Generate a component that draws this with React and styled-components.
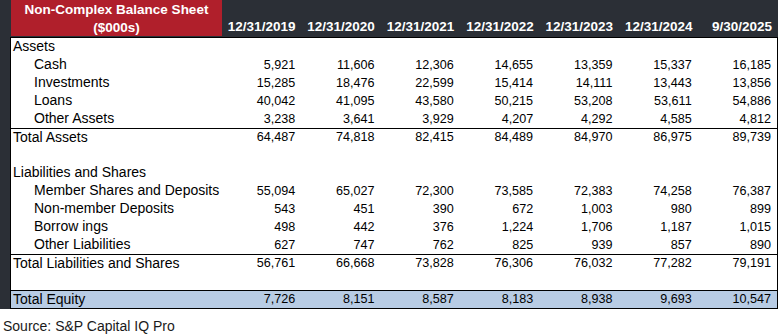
import React from "react";
import styled, { createGlobalStyle } from "styled-components";

const Global = createGlobalStyle`
  html, body { margin: 0; padding: 0; background: #fff; }
  body { font-family: "Liberation Sans", Arial, sans-serif; color: #000; }
`;

const Page = styled.div`
  width: 780px;
  height: 336px;
  background: #fff;
`;

const Frame = styled.div`
  display: flex;
  width: 778px;
`;

const Strip = styled.div`
  width: 10px;
  background: #2b2f36;
  flex: none;
`;

const Table = styled.div`
  flex: 1;
  display: flex;
  flex-direction: column;
  border-bottom: 1px solid #000;
`;

const cols = "211px repeat(7, 1fr)";

const HeaderRow = styled.div`
  display: grid;
  grid-template-columns: ${cols};
  height: 37px;
  background: #2b2f36;
  border-bottom: 1px solid #000;
  box-sizing: content-box;
  padding-left: 1px;
`;

const TitleCell = styled.div`
  background: #b01f2b;
  color: #fff;
  font-weight: bold;
  font-size: 13.5px;
  line-height: 18px;
  text-align: center;
  padding-top: 1px;
  height: 36px;
  box-sizing: border-box;
`;

const DateCell = styled.div`
  color: #fff;
  font-weight: bold;
  font-size: 13.5px;
  text-align: right;
  padding-right: 6px;
  align-self: end;
  padding-bottom: 1px;
  line-height: 18px;
  white-space: nowrap;
`;

const Body = styled.div`
  border-left: 1px solid #000;
  border-right: 1px solid #000;
  display: flex;
  flex-direction: column;
`;

const Row = styled.div`
  display: grid;
  grid-template-columns: ${cols};
  height: 18px;
  box-sizing: border-box;
  align-items: center;
  border-top: ${(p) => (p.$line ? "1px solid #000" : "none")};
  background: ${(p) => (p.$shade ? "#b8cce4" : "transparent")};
`;

const Label = styled.div`
  font-size: 14px;
  padding-left: ${(p) => (p.$indent ? "23px" : "2px")};
  white-space: nowrap;
  line-height: 17px;
  margin-top: -1px;
`;

const Num = styled.div`
  font-size: 12.6px;
  text-align: right;
  padding-right: 6px;
  line-height: 17px;
`;

const Source = styled.div`
  font-size: 14px;
  color: #1a1a1a;
  padding: 9px 0 0 3px;
`;

const dates = [
  "12/31/2019",
  "12/31/2020",
  "12/31/2021",
  "12/31/2022",
  "12/31/2023",
  "12/31/2024",
  "9/30/2025",
];

const rows = [
  { label: "Assets" },
  { label: "Cash", indent: true, v: ["5,921", "11,606", "12,306", "14,655", "13,359", "15,337", "16,185"] },
  { label: "Investments", indent: true, v: ["15,285", "18,476", "22,599", "15,414", "14,111", "13,443", "13,856"] },
  { label: "Loans", indent: true, v: ["40,042", "41,095", "43,580", "50,215", "53,208", "53,611", "54,886"] },
  { label: "Other Assets", indent: true, v: ["3,238", "3,641", "3,929", "4,207", "4,292", "4,585", "4,812"] },
  { label: "Total Assets", line: true, v: ["64,487", "74,818", "82,415", "84,489", "84,970", "86,975", "89,739"] },
  { label: "" },
  { label: "Liabilities and Shares" },
  { label: "Member Shares and Deposits", indent: true, v: ["55,094", "65,027", "72,300", "73,585", "72,383", "74,258", "76,387"] },
  { label: "Non-member Deposits", indent: true, v: ["543", "451", "390", "672", "1,003", "980", "899"] },
  { label: "Borrow ings", indent: true, v: ["498", "442", "376", "1,224", "1,706", "1,187", "1,015"] },
  { label: "Other Liabilities", indent: true, v: ["627", "747", "762", "825", "939", "857", "890"] },
  { label: "Total Liabilities and Shares", line: true, v: ["56,761", "66,668", "73,828", "76,306", "76,032", "77,282", "79,191"] },
  { label: "" },
  { label: "Total Equity", line: true, shade: true, v: ["7,726", "8,151", "8,587", "8,183", "8,938", "9,693", "10,547"] },
];

export default function App() {
  return (
    <Page>
      <Global />
      <Frame>
        <Strip />
        <Table>
          <HeaderRow>
            <TitleCell>
              Non-Complex Balance Sheet
              <br />
              ($000s)
            </TitleCell>
            {dates.map((d) => (
              <DateCell key={d}>{d}</DateCell>
            ))}
          </HeaderRow>
          <Body>
            {rows.map((r, i) => (
              <Row key={i} $line={r.line} $shade={r.shade}>
                <Label $indent={r.indent}>{r.label}</Label>
                {(r.v || Array(7).fill("")).map((n, j) => (
                  <Num key={j}>{n}</Num>
                ))}
              </Row>
            ))}
          </Body>
        </Table>
      </Frame>
      <Source>Source: S&amp;P Capital IQ Pro</Source>
    </Page>
  );
}
